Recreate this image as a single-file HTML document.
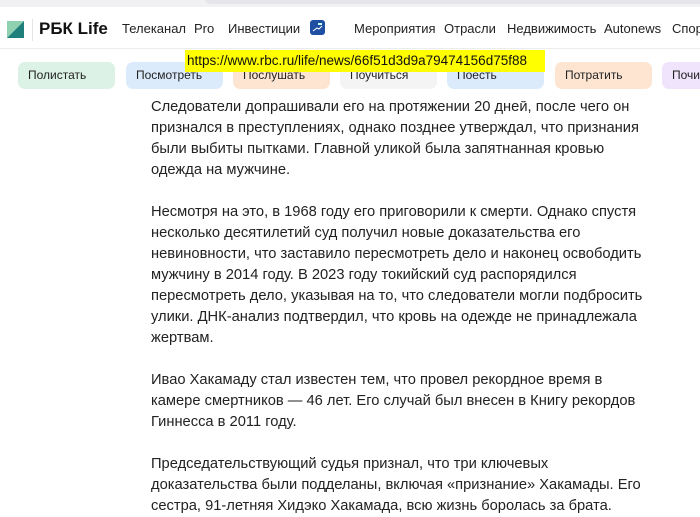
<!DOCTYPE html>
<html><head><meta charset="utf-8"><style>
*{margin:0;padding:0;box-sizing:border-box}
body{width:700px;height:498px;overflow:hidden;background:#fff;font-family:"Liberation Sans",Arial,sans-serif;position:relative;color:#222}
.top{position:absolute;left:0;top:0;width:700px;height:7px;background:#f1f1f3}
.top i{position:absolute;left:205px;top:-6px;width:520px;height:10px;background:#e6e6ea;border-radius:6px}
.hdr{position:absolute;left:0;top:7px;width:700px;height:42px;border-bottom:1px solid #ececec;white-space:nowrap}
.logo{position:absolute;left:7px;top:14px;width:17px;height:17px}
.div{position:absolute;left:32px;top:12px;width:1px;height:22px;background:#e5e5e5}
.brand{position:absolute;left:39px;top:12px;font-size:17px;font-weight:bold;color:#111}
.nav{position:absolute;top:14px;font-size:13px;color:#222}
.chip{position:absolute;top:62px;height:27px;width:97px;border-radius:7px;font-size:12px;line-height:27px;padding-left:10px;color:#222;white-space:nowrap;overflow:hidden}
.url{position:absolute;left:185px;top:50px;width:360px;height:22px;background:#ffff00;font-size:13.5px;line-height:22px;padding-left:2px;color:#111}
.txt{position:absolute;left:151px;top:97px;font-size:14.7px;line-height:21px;color:#222;white-space:nowrap}
.cover{position:absolute;left:0;top:49px;width:700px;height:52px;background:#fff}
</style></head><body>
<div class="top"><i></i></div>
<div class="txt">Следователи допрашивали его на протяжении 20 дней, после чего он<br>признался в преступлениях, однако позднее утверждал, что признания<br>были выбиты пытками. Главной уликой была запятнанная кровью<br>одежда на мужчине.<br><br>Несмотря на это, в 1968 году его приговорили к смерти. Однако спустя<br>несколько десятилетий суд получил новые доказательства его<br>невиновности, что заставило пересмотреть дело и наконец освободить<br>мужчину в 2014 году. В 2023 году токийский суд распорядился<br>пересмотреть дело, указывая на то, что следователи могли подбросить<br>улики. ДНК-анализ подтвердил, что кровь на одежде не принадлежала<br>жертвам.<br><br>Ивао Хакамаду стал известен тем, что провел рекордное время в<br>камере смертников — 46 лет. Его случай был внесен в Книгу рекордов<br>Гиннесса в 2011 году.<br><br>Председательствующий судья признал, что три ключевых<br>доказательства были подделаны, включая «признание» Хакамады. Его<br>сестра, 91-летняя Хидэко Хакамада, всю жизнь боролась за брата.</div>
<div class="cover"></div>
<div class="hdr">
<svg class="logo" viewBox="0 0 17 17"><polygon points="0,0 17,0 0,17" fill="#8fd0b0"/><polygon points="17,0 17,17 0,17" fill="#1f7f7a"/></svg>
<div class="div"></div>
<div class="brand">РБК Life</div>
<div class="nav" style="left:122px">Телеканал</div>
<div class="nav" style="left:194px">Pro</div>
<div class="nav" style="left:228px">Инвестиции</div>
<svg style="position:absolute;left:310px;top:13px" width="15" height="15" viewBox="0 0 15 15"><rect width="15" height="15" rx="3" fill="#1e4fa3"/><path d="M3 11 L7 8 L9 9 L12 6" stroke="#fff" stroke-width="1" fill="none"/><rect x="8" y="3" width="4" height="2" fill="#cfe"/></svg>
<div class="nav" style="left:354px">Мероприятия</div>
<div class="nav" style="left:444px">Отрасли</div>
<div class="nav" style="left:507px">Недвижимость</div>
<div class="nav" style="left:604px">Autonews</div>
<div class="nav" style="left:672px">Спорт</div>
</div>
<div class="chip" style="left:18px;background:#dcf2e6">Полистать</div>
<div class="chip" style="left:126px;background:#dcebfc">Посмотреть</div>
<div class="chip" style="left:233px;background:#fde5d2">Послушать</div>
<div class="chip" style="left:340px;background:#f4f4f5">Поучиться</div>
<div class="chip" style="left:447px;background:#dcebfc">Поесть</div>
<div class="chip" style="left:555px;background:#fde5d2">Потратить</div>
<div class="chip" style="left:662px;background:#efe4fb">Почитать</div>
<div class="url">https://www.rbc.ru/life/news/66f51d3d9a79474156d75f88</div>
</body></html>
